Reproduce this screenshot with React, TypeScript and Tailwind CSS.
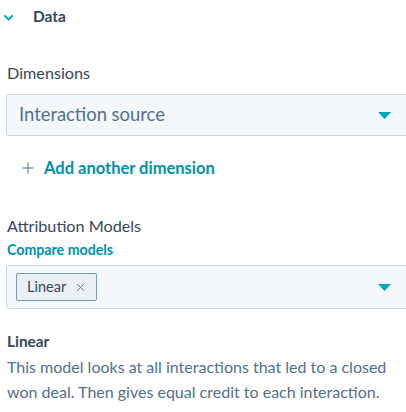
import { X } from 'lucide-react';

function Caret() {
  return (
    <svg width="13" height="7" viewBox="0 0 13 7" className="shrink-0">
      <path d="M0 0 H13 L6.5 7 Z" fill="#00a4bd" />
    </svg>
  );
}

export default function App() {
  return (
    <div className="w-[406px] h-[412px] overflow-hidden bg-white font-['Lato',sans-serif] text-[#33475b]">
      {/* Section header */}
      <div className="flex items-center h-[34px] pl-[4px]">
        <svg width="9" height="6" viewBox="0 0 9 6" className="mt-[1px]">
          <path d="M1 1 L4.5 4.5 L8 1" fill="none" stroke="#00a4bd" strokeWidth="1.8" strokeLinecap="round" strokeLinejoin="round" />
        </svg>
        <span className="ml-[20px] text-[15.5px] font-bold">Data</span>
      </div>

      <div className="pl-[6px]">
        <div className="mt-[29px] pl-[1px] text-[16.2px] leading-[20px]">Dimensions</div>

        <div className="mt-[11px] -mr-[10px] h-[42px] flex items-center justify-between border border-[#cbd6e2] rounded-[3px] bg-[#f5f8fa] pl-[12px] pr-[24px]">
          <span className="text-[18.4px] text-[#516f90]">Interaction source</span>
          <Caret />
        </div>

        <button className="mt-[22px] ml-[16px] flex items-center gap-[10px] text-[#0091ae] font-bold text-[16.5px] leading-[20px]">
          <svg width="12" height="12" viewBox="0 0 12 12">
            <path d="M6 0.5 V11.5 M0.5 6 H11.5" stroke="#7c98b6" strokeWidth="1.4" />
          </svg>
          Add another dimension
        </button>

        <div className="mt-[38px] pl-[1px] text-[16.2px] leading-[20px]">Attribution Models</div>
        <div className="mt-[6px] pl-[1px] text-[14.2px] font-bold text-[#0091ae] leading-[16px]">Compare models</div>

        <div className="mt-[7px] -mr-[10px] h-[44px] flex items-center justify-between border border-[#cbd6e2] rounded-[3px] bg-[#f5f8fa] pl-[9px] pr-[24px]">
          <span className="h-[28px] flex items-center gap-[8px] border border-[#7c98b6] rounded-[2px] bg-[#eaf0f6] pl-[10px] pr-[9px] text-[14.5px] text-[#33475b]">
            Linear
            <X size={13} strokeWidth={1.6} className="text-[#516f90]" />
          </span>
          <Caret />
        </div>

        <div className="mt-[22px] pl-[1px] text-[15.4px] font-bold leading-[20px]">Linear</div>
        <p className="mt-[3px] pl-[1px] pr-[4px] text-[16px] leading-[25px] text-[#516f90]">
          This model looks at all interactions that led to a closed won deal. Then gives equal credit to each interaction.
        </p>
      </div>
    </div>
  );
}
